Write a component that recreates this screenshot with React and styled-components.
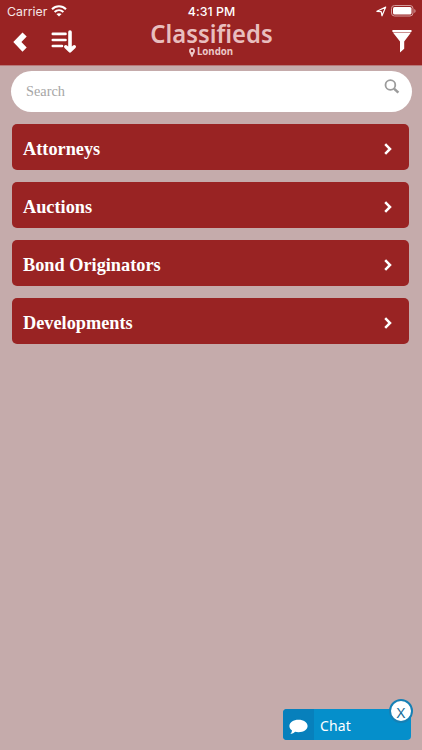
// Imports
import styled, {createGlobalStyle} from 'styled-components';


// Styles
const GlobalStyle = createGlobalStyle`
    *{
        box-sizing:border-box;
    }
    body{
        margin:0;
        background-color:#c5abab;
    }
`
const Screen = styled.main`
    width:100%;
    height:750px;
    display:flex;
    overflow:hidden;
    flex-direction:column;
    background-color:#c5abab;
`
const Header = styled.header`
    height:66px;
    color:#fff;
    flex-shrink:0;
    background-color:#992323;
    border-bottom:1px solid #b77878;
`
const StatusBar = styled.div`
    height:22px;
    display:grid;
    font-size:12.3px;
    padding:0 6px 0 7px;
    align-items:center;
    font-family:'Inter', sans-serif;
    grid-template-columns:1fr auto 1fr;
`
const Carrier = styled.div`
    gap:4px;
    display:flex;
    color:#f6e6e6;
    align-items:center;
`
const Clock = styled.div`
    font-weight:500;
    letter-spacing:0.05px;
`
const Indicators = styled.div`
    gap:4px;
    display:flex;
    align-items:center;
    justify-content:flex-end;
`
const NavBar = styled.nav`
    height:43px;
    display:grid;
    grid-template-columns:1fr auto 1fr;
`
const NavGroup = styled.div`
    display:flex;
    align-items:flex-start;
    gap:${({gap}) => gap || 0}px;
    padding:${({pad}) => pad};
    justify-content:${({end}) => end ? 'flex-end' : 'flex-start'};
`
const TitleBlock = styled.div`
    width:122px;
    display:flex;
    color:#e8bebe;
    align-items:center;
    flex-direction:column;
    font-family:'Noto Sans', sans-serif;
`
const Title = styled.h1`
    margin:0;
    font-size:25.5px;
    font-weight:600;
    line-height:23px;
    white-space:nowrap;
    transform:scaleX(0.935);
`
const Location = styled.div`
    gap:2px;
    display:flex;
    color:#ecc8c8;
    font-size:9.7px;
    font-weight:700;
    line-height:12px;
    padding-top:1px;
    align-items:center;
`
const SearchBar = styled.label`
    height:41px;
    display:flex;
    flex-shrink:0;
    margin:5px 10.5px 12px;
    align-items:flex-start;
    border-radius:21px;
    background-color:#fff;
    padding:0 12px 0 15.5px;
`
const SearchInput = styled.input`
    flex:1;
    padding:0;
    height:41px;
    border:none;
    outline:none;
    font-size:14.3px;
    background:transparent;
    font-family:'Liberation Serif', serif;

    &::placeholder{
        opacity:1;
        color:#a6a6a6;
    }
`
const CategoryList = styled.ul`
    flex:1;
    gap:12px;
    margin:0;
    display:flex;
    list-style:none;
    padding:0 13px 0 12px;
    flex-direction:column;
`
const Category = styled.li`
    color:#fff;
    height:46px;
    display:flex;
    font-size:18.3px;
    font-weight:700;
    cursor:pointer;
    border-radius:5px;
    align-items:center;
    padding:4px 17.5px 0 11px;
    background-color:#992323;
    justify-content:space-between;
    font-family:'Liberation Serif', serif;
`
const ChatButton = styled.div`
    width:128px;
    height:31px;
    color:#fff;
    display:flex;
    cursor:pointer;
    position:relative;
    border-radius:4px;
    margin:0 11px 10px;
    align-self:flex-end;
    align-items:stretch;
    background-color:#058fcb;
`
const ChatIcon = styled.div`
    width:31px;
    display:flex;
    padding-top:5px;
    align-items:center;
    justify-content:center;
    background-color:#0780bc;
    border-radius:4px 0 0 4px;
`
const ChatLabel = styled.span`
    font-size:14px;
    line-height:33px;
    padding-left:6px;
    letter-spacing:0.1px;
    font-family:'Noto Sans', sans-serif;
`
const CloseBadge = styled.span`
    top:-10px;
    right:-2px;
    width:24px;
    height:24px;
    display:flex;
    color:#176d99;
    font-size:15px;
    padding-top:1px;
    position:absolute;
    border-radius:50%;
    align-items:center;
    justify-content:center;
    background-color:#fff;
    border:2px solid #1680b5;
    font-family:'Noto Sans', sans-serif;
`


// Icons
const WifiIcon = () => (
    <svg width='16' height='12' viewBox='0 0 16 12' fill='none' stroke='#fff' strokeWidth='2'>
        <path d='M1 4.3C5 .3 11 .3 15 4.3M3.6 7.1C6.2 4.7 9.8 4.7 12.4 7.1'/>
        <path d='M8 11.6L5.4 9.1Q8 7.2 10.6 9.1Z' fill='#fff' stroke='none'/>
    </svg>
)
const ArrowIcon = () => (
    <svg width='11' height='11' viewBox='0 0 11 11' fill='none' stroke='#fff' strokeWidth='1.2' strokeLinejoin='round'>
        <path d='M.9 5.3L9.7 1.1L6 9.8L5.2 5.7Z'/>
    </svg>
)
const BatteryIcon = () => (
    <svg width='25' height='12' viewBox='0 0 25 12'>
        <rect x='.5' y='.5' width='21.5' height='10.5' rx='3' fill='none' stroke='#d49c9c'/>
        <rect x='2' y='2' width='18.5' height='7.5' rx='1.5' fill='#fff'/>
        <path d='M23.3 4v4q1.3-.6 1.3-2t-1.3-2' fill='#d49c9c'/>
    </svg>
)
const BackIcon = () => (
    <svg width='14' height='22' viewBox='0 0 14 22'>
        <path d='M9.5 2.5L13.7 6.5L8.4 12L13.7 17.5L9.5 21.7L.3 12Z' fill='#fff'/>
    </svg>
)
const SortIcon = () => (
    <svg width='26' height='24' viewBox='0 0 26 24' fill='none' stroke='#fff' strokeLinecap='round' strokeLinejoin='round'>
        <path d='M1.8 3.9H14.5M1.8 10H14.5M1.8 16H11' strokeWidth='2.6'/>
        <path d='M19 2V19.6M14.8 16.8L19 20.8L23.2 16.8' strokeWidth='3.6'/>
    </svg>
)
const FilterIcon = () => (
    <svg width='20' height='23' viewBox='0 0 20 23' fill='#fff'>
        <path d='M.4 0H19.5V2.1H.4ZM.9 2.6H19L12.2 11.5V18.8L8 22.5V11.5Z'/>
    </svg>
)
const PinIcon = () => (
    <svg width='6' height='9' viewBox='0 0 6 9'>
        <path fillRule='evenodd' d='M3 0A3 3 0 0 1 6 3C6 5 4.2 6 3.7 8.8H2.3C1.8 6 0 5 0 3A3 3 0 0 1 3 0ZM3 1.8A1.2 1.2 0 1 0 3 4.2A1.2 1.2 0 1 0 3 1.8Z' fill='#ecc8c8'/>
    </svg>
)
const SearchGlyph = styled.svg`
    margin-top:8px;
`
const SearchIcon = () => (
    <SearchGlyph width='16' height='16' viewBox='0 0 16 16' fill='none' stroke='#9b9b9b'>
        <circle cx='6.4' cy='6' r='4.9' strokeWidth='1.8'/>
        <path d='M10 9.6L14.4 13.6' strokeWidth='2.6'/>
    </SearchGlyph>
)
const ChevronIcon = () => (
    <svg width='8' height='12' viewBox='0 0 8 12' fill='none' stroke='#fff' strokeWidth='2.5'>
        <path d='M1.2 1.2L6 6L1.2 10.8'/>
    </svg>
)
const BubbleIcon = () => (
    <svg width='19' height='16' viewBox='0 0 19 16'>
        <path d='M9.5.8C14.6.8 18.6 3.4 18.6 7S14.6 13.2 9.5 13.2Q7.6 13.2 6.2 12.8Q4.4 14.5 1.4 15Q3 13.4 3 11.5C1.3 10.4.4 8.8.4 7C.4 3.4 4.4.8 9.5.8Z' fill='#fff'/>
    </svg>
)


// Data
const categories = ['Attorneys', 'Auctions', 'Bond Originators', 'Developments'];


// Main Function
const App = () => {
  return (
    <>
        <GlobalStyle />
        <Screen>
            <Header>
                <StatusBar>
                    <Carrier>Carrier <WifiIcon /></Carrier>
                    <Clock>4:31 PM</Clock>
                    <Indicators><ArrowIcon /><BatteryIcon /></Indicators>
                </StatusBar>
                <NavBar>
                    <NavGroup gap={24} pad='8px 0 0 13px'>
                        <BackIcon />
                        <SortIcon />
                    </NavGroup>
                    <TitleBlock>
                        <Title>Classifieds</Title>
                        <Location><PinIcon />London</Location>
                    </TitleBlock>
                    <NavGroup end pad='8px 10px 0 0'>
                        <FilterIcon />
                    </NavGroup>
                </NavBar>
            </Header>
            <SearchBar>
                <SearchInput placeholder='Search'/>
                <SearchIcon />
            </SearchBar>
            <CategoryList>
                {categories.map(name => (
                    <Category key={name}>{name}<ChevronIcon /></Category>
                ))}
            </CategoryList>
            <ChatButton>
                <ChatIcon><BubbleIcon /></ChatIcon>
                <ChatLabel>Chat</ChatLabel>
                <CloseBadge>X</CloseBadge>
            </ChatButton>
        </Screen>
    </>
  )
}


// Export
export default App;
